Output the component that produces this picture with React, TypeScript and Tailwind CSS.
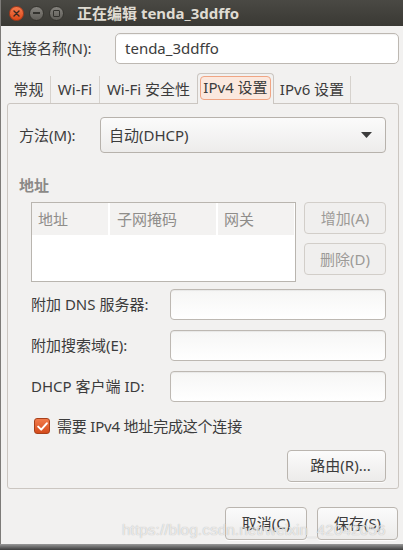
import React from 'react';

const font = "font-['Noto_Sans','Noto_Sans_CJK_SC',sans-serif]";

function Field({ className = '' }: { className?: string }) {
  return (
    <div
      className={`h-[31px] rounded-[4px] border border-[#bdb8b2] bg-gradient-to-b from-[#f6f6f5] to-white shadow-[inset_0_1px_1px_rgba(0,0,0,0.06)] ${className}`}
    />
  );
}

function Button({
  label,
  disabled,
  className = '',
}: {
  label: string;
  disabled?: boolean;
  className?: string;
}) {
  return (
    <div
      className={`flex h-[32px] items-center justify-center rounded-[4px] border text-[15px] ${
        disabled
          ? 'border-[#d2cec9] bg-[#f0efee] text-[#9c9a97]'
          : 'border-[#bab5af] bg-gradient-to-b from-[#fbfbfb] to-[#ecebea] text-[#3c3c3c] shadow-[0_1px_0_rgba(255,255,255,0.8)]'
      } ${className}`}
    >
      {label}
    </div>
  );
}

function WindowButton({ kind }: { kind: 'close' | 'min' | 'max' }) {
  const bg =
    kind === 'close'
      ? 'bg-gradient-to-b from-[#f37a4c] to-[#dd4814] border-[#a8391a]'
      : 'bg-gradient-to-b from-[#85837e] to-[#5f5d58] border-[#35342f]';
  return (
    <div className={`flex h-[15px] w-[15px] items-center justify-center rounded-full border ${bg}`}>
      {kind === 'close' && (
        <svg width="7" height="7" viewBox="0 0 7 7">
          <path d="M1 1l5 5M6 1L1 6" stroke="#3b2a22" strokeWidth="1.4" strokeLinecap="round" />
        </svg>
      )}
      {kind === 'min' && <div className="h-[2px] w-[7px] bg-[#33322e]" />}
      {kind === 'max' && <div className="h-[7px] w-[7px] rounded-[1px] border-[1.5px] border-[#33322e]" />}
    </div>
  );
}

export default function App() {
  return (
    <div className={`relative h-[550px] w-[403px] overflow-hidden bg-[#4b4b4b] ${font}`}>
      <div className="flex h-[544px] flex-col border-l border-[#7d7b78]">
        {/* title bar */}
        <div className="flex h-[26px] items-center bg-gradient-to-b from-[#4a4944] to-[#3a3934] pl-[8px]">
          <div className="flex items-center gap-[5px]">
            <WindowButton kind="close" />
            <WindowButton kind="min" />
            <WindowButton kind="max" />
          </div>
          <div className="ml-[13px] text-[15px] font-bold leading-none text-[#dfdbd2]">
            正在编辑 tenda_3ddffo
          </div>
        </div>

        {/* body */}
        <div className="flex flex-1 flex-col bg-[#f2f1f0] pl-[6px] pr-[4px] pt-[7px] text-[#3c3c3c]">
          <div className="flex h-[31px] items-center">
            <div className="w-[108px] text-[15px]">连接名称(N):</div>
            <div className="flex h-[31px] flex-1 items-center rounded-[5px] border border-[#bdb8b2] bg-white pl-[9px] text-[15px] shadow-[inset_0_1px_1px_rgba(0,0,0,0.05)]">
              tenda_3ddffo
            </div>
          </div>

          {/* tabs */}
          <div className="mt-[9px] flex h-[30px] items-stretch text-[15px]">
            <div className="mt-[3px] flex w-[44px] items-center justify-center border-r border-[#d6d2cd]">常规</div>
            <div className="mt-[3px] flex w-[49px] items-center justify-center border-r border-[#d6d2cd]">Wi-Fi</div>
            <div className="mt-[3px] flex w-[97px] items-center justify-center">Wi-Fi 安全性</div>
            <div className="relative z-10 -mb-px flex w-[77px] items-center justify-center rounded-t-[4px] border border-b-0 border-[#cbc6c1] bg-[#f2f1f0] pb-[3px]">
              <div className="flex h-[24px] items-center rounded-[4px] border border-[#f0a584] bg-[#fbe8de] px-[2px]">
                IPv4 设置
              </div>
            </div>
            <div className="mt-[3px] flex w-[77px] items-center justify-center border-r border-[#d6d2cd]">IPv6 设置</div>
          </div>

          {/* panel */}
          <div className="flex h-[386px] flex-col rounded-[3px] border border-[#cbc6c1] pl-[11px] pr-[12px] pt-[13px]">
            <div className="flex h-[36px] items-center">
              <div className="w-[81px] text-[15px]">方法(M):</div>
              <div className="flex h-[36px] flex-1 items-center justify-between rounded-[4px] border border-[#b7b2ac] bg-gradient-to-b from-[#fbfbfb] to-[#edeceb] pl-[8px] pr-[13px] text-[15px]">
                <span>自动(DHCP)</span>
                <svg width="11" height="6" viewBox="0 0 11 6">
                  <path d="M0 0h11L5.5 6z" fill="#3c3c3c" />
                </svg>
              </div>
            </div>

            <div className="mt-[23px] text-[15px] font-bold leading-[18px] text-[#8b8987]">地址</div>

            <div className="ml-[12px] mt-[8px] flex gap-[8px]">
              <div className="h-[80px] w-[265px] border border-[#b9b5af] bg-white">
                <div className="flex h-[32px] gap-[2px] text-[15px] text-[#8f8d8a]">
                  <div className="flex w-[76px] items-center bg-[#f3f2f1] pl-[6px]">地址</div>
                  <div className="flex w-[106px] items-center bg-[#f3f2f1] pl-[7px]">子网掩码</div>
                  <div className="flex w-[76px] items-center bg-[#f3f2f1] pl-[6px]">网关</div>
                </div>
              </div>
              <div className="flex w-[82px] flex-col gap-[9px]">
                <Button label="增加(A)" disabled />
                <Button label="删除(D)" disabled />
              </div>
            </div>

            <div className="ml-[12px] mt-[7px] flex flex-col gap-[10px] text-[15px]">
              <div className="flex items-center">
                <div className="w-[139px]">附加 DNS 服务器:</div>
                <Field className="flex-1" />
              </div>
              <div className="flex items-center">
                <div className="w-[139px]">附加搜索域(E):</div>
                <Field className="flex-1" />
              </div>
              <div className="flex items-center">
                <div className="w-[139px]">DHCP 客户端 ID:</div>
                <Field className="flex-1" />
              </div>
            </div>

            <div className="ml-[15px] mt-[13px] flex items-center gap-[7px] text-[15px] tracking-[-0.2px]">
              <div className="flex h-[16px] w-[16px] items-center justify-center rounded-[3px] border border-[#a8401a] bg-gradient-to-b from-[#f27b4b] to-[#d44a1a]">
                <svg width="11" height="9" viewBox="0 0 11 9">
                  <path d="M1.2 4.6l3 3L9.8 1.3" stroke="white" strokeWidth="2" fill="none" strokeLinecap="round" strokeLinejoin="round" />
                </svg>
              </div>
              <span>需要 IPv4 地址完成这个连接</span>
            </div>

            <div className="mt-[12px] flex justify-end">
              <Button label="路由(R)..." className="w-[99px] pl-[8px]" />
            </div>
          </div>

          <div className="mt-[18px] flex justify-end gap-[10px] pr-[1px]">
            <Button label="取消(C)" className="h-[33px] w-[82px]" />
            <Button label="保存(S)" className="h-[33px] w-[81px]" />
          </div>
        </div>
      </div>
      <div className="h-[6px] bg-gradient-to-b from-[#9a9a9a] to-[#3e3e3e]" />

      <div className="pointer-events-none absolute left-[122px] top-[518px] z-20 whitespace-nowrap font-['Liberation_Sans',sans-serif] text-[15.5px] text-white/70 [text-shadow:0_0_1px_rgba(0,0,0,0.3)]">
        https://blog.csdn.net/weixin_42042056
      </div>
    </div>
  );
}
